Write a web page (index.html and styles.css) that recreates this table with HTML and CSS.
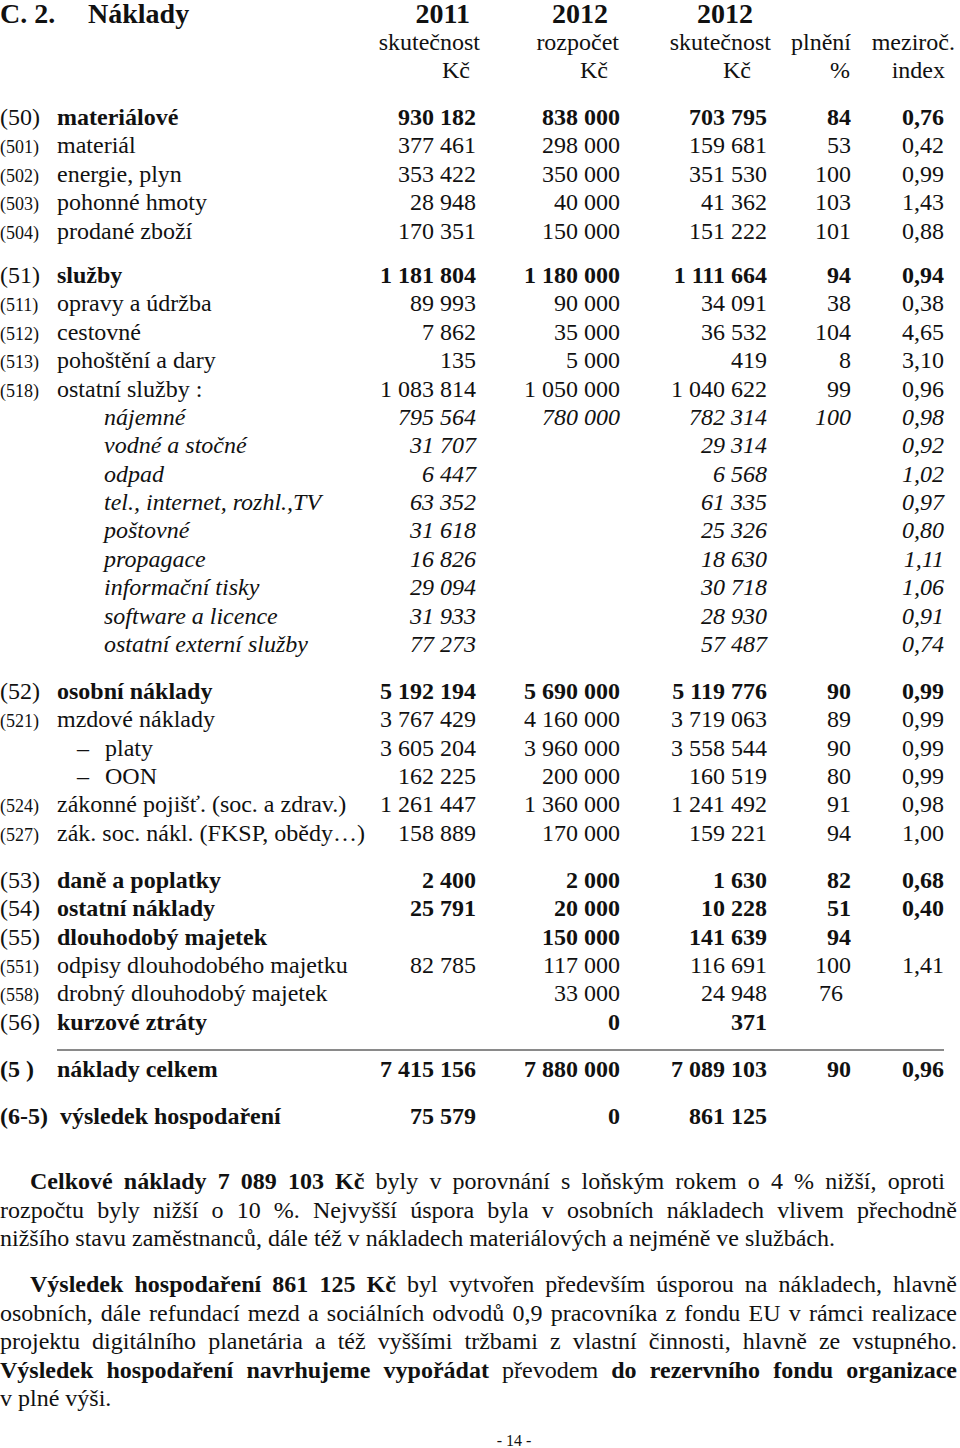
FILE: index.html
```html
<!DOCTYPE html>
<html lang="cs">
<head>
<meta charset="utf-8">
<title>C. 2. Náklady</title>
<link rel="stylesheet" href="styles.css">
</head>
<body>
<div class="page">
  <div class="head">
    <div class="row title">
      <span class="t-title"><span class="t-num">C. 2.</span>Náklady</span>
      <span class="n pr6">2011</span>
      <span class="n pr12">2012</span>
      <span class="n pr14">2012</span>
      <span></span>
      <span></span>
    </div>
    <div class="row sub">
      <span></span><span></span>
      <span class="n mr4">skutečnost</span>
      <span class="n pr1">rozpočet</span>
      <span class="n mr4">skutečnost</span>
      <span class="n">plnění</span>
      <span class="n mr11">meziroč.</span>
    </div>
    <div class="row sub">
      <span></span><span></span>
      <span class="n pr6">Kč</span>
      <span class="n pr12">Kč</span>
      <span class="n pr16">Kč</span>
      <span class="n pr1">%</span>
      <span class="n mr1">index</span>
    </div>
  </div>

  <div class="group g1">
    <div class="row b"><span class="code n-reg">(50)</span><span class="lbl">materiálové</span><span class="n">930 182</span><span class="n">838 000</span><span class="n">703 795</span><span class="n">84</span><span class="n">0,76</span></div>
    <div class="row"><span class="code"><small>(501)</small></span><span class="lbl">materiál</span><span class="n">377 461</span><span class="n">298 000</span><span class="n">159 681</span><span class="n">53</span><span class="n">0,42</span></div>
    <div class="row"><span class="code"><small>(502)</small></span><span class="lbl">energie, plyn</span><span class="n">353 422</span><span class="n">350 000</span><span class="n">351 530</span><span class="n">100</span><span class="n">0,99</span></div>
    <div class="row"><span class="code"><small>(503)</small></span><span class="lbl">pohonné hmoty</span><span class="n">28 948</span><span class="n">40 000</span><span class="n">41 362</span><span class="n">103</span><span class="n">1,43</span></div>
    <div class="row"><span class="code"><small>(504)</small></span><span class="lbl">prodané zboží</span><span class="n">170 351</span><span class="n">150 000</span><span class="n">151 222</span><span class="n">101</span><span class="n">0,88</span></div>
  </div>

  <div class="group g2">
    <div class="row b"><span class="code n-reg">(51)</span><span class="lbl">služby</span><span class="n">1 181 804</span><span class="n">1 180 000</span><span class="n">1 111 664</span><span class="n">94</span><span class="n">0,94</span></div>
    <div class="row"><span class="code"><small>(511)</small></span><span class="lbl">opravy a údržba</span><span class="n">89 993</span><span class="n">90 000</span><span class="n">34 091</span><span class="n">38</span><span class="n">0,38</span></div>
    <div class="row"><span class="code"><small>(512)</small></span><span class="lbl">cestovné</span><span class="n">7 862</span><span class="n">35 000</span><span class="n">36 532</span><span class="n">104</span><span class="n">4,65</span></div>
    <div class="row"><span class="code"><small>(513)</small></span><span class="lbl">pohoštění a dary</span><span class="n">135</span><span class="n">5 000</span><span class="n">419</span><span class="n">8</span><span class="n">3,10</span></div>
    <div class="row"><span class="code"><small>(518)</small></span><span class="lbl">ostatní služby :</span><span class="n">1 083 814</span><span class="n">1 050 000</span><span class="n">1 040 622</span><span class="n">99</span><span class="n">0,96</span></div>
    <div class="row i"><span class="code"></span><span class="lbl sub-item">nájemné</span><span class="n">795 564</span><span class="n">780 000</span><span class="n">782 314</span><span class="n">100</span><span class="n">0,98</span></div>
    <div class="row i"><span class="code"></span><span class="lbl sub-item">vodné a stočné</span><span class="n">31 707</span><span class="n"></span><span class="n">29 314</span><span class="n"></span><span class="n">0,92</span></div>
    <div class="row i"><span class="code"></span><span class="lbl sub-item">odpad</span><span class="n">6 447</span><span class="n"></span><span class="n">6 568</span><span class="n"></span><span class="n">1,02</span></div>
    <div class="row i"><span class="code"></span><span class="lbl sub-item">tel., internet, rozhl.,TV</span><span class="n">63 352</span><span class="n"></span><span class="n">61 335</span><span class="n"></span><span class="n">0,97</span></div>
    <div class="row i"><span class="code"></span><span class="lbl sub-item">poštovné</span><span class="n">31 618</span><span class="n"></span><span class="n">25 326</span><span class="n"></span><span class="n">0,80</span></div>
    <div class="row i"><span class="code"></span><span class="lbl sub-item">propagace</span><span class="n">16 826</span><span class="n"></span><span class="n">18 630</span><span class="n"></span><span class="n">1,11</span></div>
    <div class="row i"><span class="code"></span><span class="lbl sub-item">informační tisky</span><span class="n">29 094</span><span class="n"></span><span class="n">30 718</span><span class="n"></span><span class="n">1,06</span></div>
    <div class="row i"><span class="code"></span><span class="lbl sub-item">software a licence</span><span class="n">31 933</span><span class="n"></span><span class="n">28 930</span><span class="n"></span><span class="n">0,91</span></div>
    <div class="row i"><span class="code"></span><span class="lbl sub-item">ostatní externí služby</span><span class="n">77 273</span><span class="n"></span><span class="n">57 487</span><span class="n"></span><span class="n">0,74</span></div>
  </div>

  <div class="group g3">
    <div class="row b"><span class="code n-reg">(52)</span><span class="lbl">osobní náklady</span><span class="n">5 192 194</span><span class="n">5 690 000</span><span class="n">5 119 776</span><span class="n">90</span><span class="n">0,99</span></div>
    <div class="row"><span class="code"><small>(521)</small></span><span class="lbl">mzdové náklady</span><span class="n">3 767 429</span><span class="n">4 160 000</span><span class="n">3 719 063</span><span class="n">89</span><span class="n">0,99</span></div>
    <div class="row"><span class="code"></span><span class="lbl dash-item"><span class="dash">–</span>platy</span><span class="n">3 605 204</span><span class="n">3 960 000</span><span class="n">3 558 544</span><span class="n">90</span><span class="n">0,99</span></div>
    <div class="row"><span class="code"></span><span class="lbl dash-item"><span class="dash">–</span>OON</span><span class="n">162 225</span><span class="n">200 000</span><span class="n">160 519</span><span class="n">80</span><span class="n">0,99</span></div>
    <div class="row"><span class="code"><small>(524)</small></span><span class="lbl">zákonné pojišť. (soc. a zdrav.)</span><span class="n">1 261 447</span><span class="n">1 360 000</span><span class="n">1 241 492</span><span class="n">91</span><span class="n">0,98</span></div>
    <div class="row"><span class="code"><small>(527)</small></span><span class="lbl">zák. soc. nákl. (FKSP, obědy…)</span><span class="n">158 889</span><span class="n">170 000</span><span class="n">159 221</span><span class="n">94</span><span class="n">1,00</span></div>
  </div>

  <div class="group g4">
    <div class="row b"><span class="code n-reg">(53)</span><span class="lbl">daně a poplatky</span><span class="n">2 400</span><span class="n">2 000</span><span class="n">1 630</span><span class="n">82</span><span class="n">0,68</span></div>
    <div class="row b"><span class="code n-reg">(54)</span><span class="lbl">ostatní náklady</span><span class="n">25 791</span><span class="n">20 000</span><span class="n">10 228</span><span class="n">51</span><span class="n">0,40</span></div>
    <div class="row b"><span class="code n-reg">(55)</span><span class="lbl">dlouhodobý majetek</span><span class="n"></span><span class="n">150 000</span><span class="n">141 639</span><span class="n">94</span><span class="n"></span></div>
    <div class="row"><span class="code"><small>(551)</small></span><span class="lbl">odpisy dlouhodobého majetku</span><span class="n">82 785</span><span class="n">117 000</span><span class="n">116 691</span><span class="n">100</span><span class="n">1,41</span></div>
    <div class="row"><span class="code"><small>(558)</small></span><span class="lbl">drobný dlouhodobý majetek</span><span class="n"></span><span class="n">33 000</span><span class="n">24 948</span><span class="n pr8">76</span><span class="n"></span></div>
    <div class="row b"><span class="code n-reg">(56)</span><span class="lbl">kurzové ztráty</span><span class="n"></span><span class="n">0</span><span class="n">371</span><span class="n"></span><span class="n"></span></div>
  </div>

  <div class="rule"></div>

  <div class="row b"><span class="code">(5 )</span><span class="lbl">náklady celkem</span><span class="n">7 415 156</span><span class="n">7 880 000</span><span class="n">7 089 103</span><span class="n">90</span><span class="n">0,96</span></div>

  <div class="group g5">
    <div class="row b"><span class="code">(6-5)</span><span class="lbl result">výsledek hospodaření</span><span class="n">75 579</span><span class="n">0</span><span class="n">861 125</span><span class="n"></span><span class="n"></span></div>
  </div>

  <div class="text">
    <p class="para">
      <span class="line first short"><b>Celkové náklady 7&nbsp;089&nbsp;103 Kč</b> byly v&nbsp;porovnání s&nbsp;loňským rokem o 4 % nižší, oproti</span>
      <span class="line">rozpočtu byly nižší o 10 %. Nejvyšší úspora byla v&nbsp;osobních nákladech vlivem přechodně</span>
      <span class="line last">nižšího stavu zaměstnanců, dále též v&nbsp;nákladech materiálových a nejméně ve službách.</span>
    </p>
    <p class="para p2">
      <span class="line first"><b>Výsledek hospodaření 861&nbsp;125 Kč</b> byl vytvořen především úsporou na nákladech, hlavně</span>
      <span class="line">osobních, dále refundací mezd a sociálních odvodů 0,9 pracovníka z fondu EU v rámci realizace</span>
      <span class="line">projektu digitálního planetária a též vyššími tržbami z&nbsp;vlastní činnosti, hlavně ze vstupného.</span>
      <span class="line"><b>Výsledek hospodaření navrhujeme vypořádat</b> převodem <b>do rezervního fondu organizace</b></span>
      <span class="line last">v plné výši.</span>
    </p>
  </div>

  <div class="pnum">- 14 -</div>
</div>
</body>
</html>
```

FILE: styles.css
```css
html, body {
  margin: 0;
  padding: 0;
  background: #ffffff;
}

body {
  font-family: "Liberation Serif", "Times New Roman", serif;
  font-size: 24px;
  color: #111111;
}

.page {
  width: 960px;
}

/* table rows */
.row {
  display: grid;
  grid-template-columns: 57px 290px 129px 144px 147px 84px 93px;
  height: 28.4px;
  line-height: 28.4px;
  white-space: nowrap;
}

.row > span {
  min-width: 0;
}

.n {
  text-align: right;
}

.b {
  font-weight: bold;
}

.b .n-reg {
  font-weight: normal;
}

.i .lbl,
.i .n {
  font-style: italic;
}

.code small {
  font-size: 18px;
}

.sub-item {
  padding-left: 47px;
}

.dash-item {
  padding-left: 20px;
}

.dash {
  display: inline-block;
  width: 28px;
}

.result {
  padding-left: 3px;
}

/* header */
.title {
  font-size: 28px;
  font-weight: bold;
  height: 28px;
  line-height: 28px;
}

.t-title {
  grid-column: 1 / 3;
}

.t-num {
  display: inline-block;
  width: 88px;
}

.sub {
  height: 28px;
  line-height: 28px;
}

.pr1 { padding-right: 1px; }
.pr6 { padding-right: 6px; }
.pr8 { padding-right: 8px; }
.pr12 { padding-right: 12px; }
.pr14 { padding-right: 14px; }
.pr16 { padding-right: 16px; }
.mr1 { margin-right: -1px; }
.mr4 { margin-right: -4px; }
.mr11 { margin-right: -11px; }

/* groups */
.g1 { margin-top: 19px; }
.g2 { margin-top: 16px; }
.g3 { margin-top: 18.4px; }
.g4 { margin-top: 18.6px; }
.g5 { margin-top: 18.6px; }

.rule {
  margin: 13px 0 3.6px 57px;
  width: 887px;
  height: 0;
  border-top: 2px solid #8a8a8a;
}

/* paragraphs */
.text {
  width: 957px;
  margin-top: 37.4px;
}

.para {
  margin: 0;
  line-height: 28.5px;
}

.p2 {
  margin-top: 17.5px;
}

.line {
  display: block;
  text-align: justify;
  text-align-last: justify;
}

.line.first {
  padding-left: 30px;
}

.line.short {
  padding-right: 12px;
}

.line.last {
  text-align: left;
  text-align-last: left;
}

.pnum {
  margin-top: 18px;
  box-sizing: border-box;
  width: 960px;
  padding-left: 68px;
  text-align: center;
  font-size: 16px;
  line-height: 20px;
}
```
